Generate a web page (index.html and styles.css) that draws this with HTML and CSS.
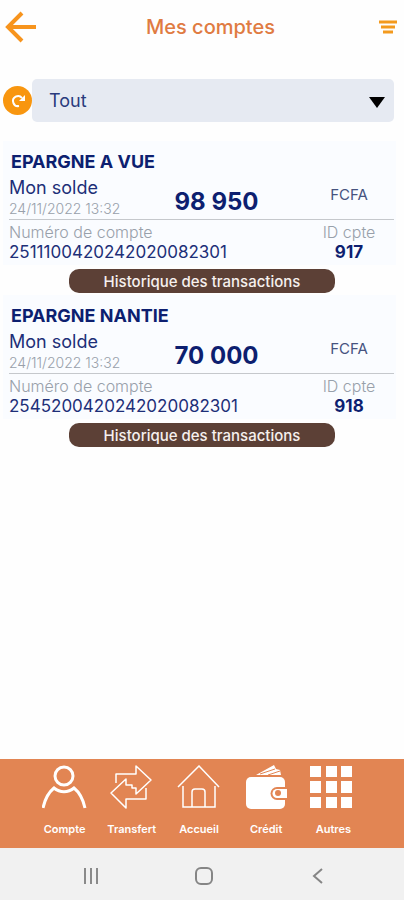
FILE: index.html
```html
<!DOCTYPE html>
<html lang="fr">
<head>
    <meta charset="UTF-8">
    <meta name="viewport" content="width=device-width, initial-scale=1.0">
    <title>Mes comptes</title>
    <link rel="stylesheet" href="styles.css">
</head>
<body>
    <header class="top-bar">
        <button class="icon-btn" aria-label="Retour">
            <svg width="32" height="32" viewBox="0 0 32 32" fill="none" stroke="#f7941d" stroke-width="4">
                <path d="M31 16H4M17 2L3 16l14 14"/>
            </svg>
        </button>
        <h1>Mes comptes</h1>
        <button class="icon-btn" aria-label="Filtrer">
            <svg width="20" height="16" viewBox="0 0 20 16" fill="none" stroke="#f39a1e" stroke-width="3">
                <path d="M1 3h18M3 8h14M5 13h10"/>
            </svg>
        </button>
    </header>

    <main>
        <div class="filter">
            <button class="refresh" aria-label="Actualiser">
                <svg width="16" height="16" viewBox="0 0 16 16" fill="none" stroke="#fff" stroke-width="2">
                    <path d="M9 13A5 5 0 1 1 12 5"/>
                    <path d="M15 2v6H9z" fill="#fff" stroke="none"/>
                </svg>
            </button>
            <div class="select-box">
                <select aria-label="Type de compte">
                    <option>Tout</option>
                </select>
                <svg class="caret" width="16" height="11" viewBox="0 0 16 11"><path d="M0 0h16L8 11z"/></svg>
            </div>
        </div>

        <section class="account">
            <div class="card">
                <h2>EPARGNE A VUE</h2>
                <div class="balance">
                    <div>
                        <p class="label">Mon solde</p>
                        <p class="date">24/11/2022 13:32</p>
                    </div>
                    <strong class="amount">98 950</strong>
                    <span class="currency">FCFA</span>
                </div>
                <div class="details">
                    <div>
                        <p class="hint">Numéro de compte</p>
                        <p class="number">2511100420242020082301</p>
                    </div>
                    <div class="account-id">
                        <p class="hint">ID cpte</p>
                        <p class="id">917</p>
                    </div>
                </div>
            </div>
            <button class="history">Historique des transactions</button>
        </section>

        <section class="account">
            <div class="card">
                <h2>EPARGNE NANTIE</h2>
                <div class="balance">
                    <div>
                        <p class="label">Mon solde</p>
                        <p class="date">24/11/2022 13:32</p>
                    </div>
                    <strong class="amount">70 000</strong>
                    <span class="currency">FCFA</span>
                </div>
                <div class="details">
                    <div>
                        <p class="hint">Numéro de compte</p>
                        <p class="number">2545200420242020082301</p>
                    </div>
                    <div class="account-id">
                        <p class="hint">ID cpte</p>
                        <p class="id">918</p>
                    </div>
                </div>
            </div>
            <button class="history">Historique des transactions</button>
        </section>
    </main>

    <nav class="menu">
        <a href="#compte">
            <svg width="46" height="46" viewBox="0 0 46 46" fill="none" stroke="#fff" stroke-width="3">
                <circle cx="22" cy="11" r="9"/>
                <path d="M1 43C3 34 7 27 12 23c6 5 14 5 20 0 5 4 9 11 11 20"/>
            </svg>
            Compte
        </a>
        <a href="#transfert">
            <svg width="46" height="46" viewBox="0 0 46 46" fill="none" stroke="#fff" stroke-width="1.500" stroke-linejoin="round">
                <path d="M7 18V9h20V1l15 14-15 14v-6h-4v-3h-6v-6L2 28l15 15v-9h20V23"/>
            </svg>
            Transfert
        </a>
        <a href="#accueil">
            <svg width="46" height="46" viewBox="0 0 46 46" fill="none" stroke="#fff" stroke-width="1.500">
                <path d="M2 22L23 1l20 21M7 21v21h32V21M16 42V27q0-3 3-3h7q3 0 3 3v15"/>
            </svg>
            Accueil
        </a>
        <a href="#credit">
            <svg width="46" height="46" viewBox="0 0 46 46" fill="#fff">
                <path d="M13 10L31 0l2 4 4 1 1 5z"/>
                <path d="M17 9l15-5M25 10l12-4" stroke="#e28553"/>
                <rect x="3" y="12" width="39" height="32" rx="5"/>
                <path d="M46 22H34a6 6 0 0 0 0 13h12z" fill="#e28553"/>
                <path d="M44 24H34a4 4 0 0 0 0 9h10z"/>
                <circle cx="35" cy="28" r="3" fill="#e28553"/>
            </svg>
            Crédit
        </a>
        <a href="#autres">
            <svg width="46" height="46" viewBox="0 0 46 46" fill="#fff">
                <path d="M0 1h11v11H0zM16 1h11v11H16zM31 1h11v11H31zM0 16h11v12H0zM16 16h11v12H16zM31 16h11v12H31zM0 32h11v11H0zM16 32h11v11H16zM31 32h11v11H31z"/>
            </svg>
            Autres
        </a>
    </nav>

    <div class="system-bar">
        <button class="icon-btn" aria-label="Applications récentes">
            <svg width="20" height="20" viewBox="0 0 20 20" fill="none" stroke="#8a8a8a" stroke-width="2"><path d="M4 2v16M10 2v16M16 2v16"/></svg>
        </button>
        <button class="icon-btn" aria-label="Écran d'accueil">
            <svg width="20" height="20" viewBox="0 0 20 20" fill="none" stroke="#858585" stroke-width="2"><rect x="2" y="2" width="16" height="16" rx="5"/></svg>
        </button>
        <button class="icon-btn" aria-label="Précédent">
            <svg width="20" height="20" viewBox="0 0 20 20" fill="none" stroke="#858585" stroke-width="2"><path d="M15 3l-8 7 8 7"/></svg>
        </button>
    </div>
</body>
</html>
```
FILE: styles.css
```css
* {
    box-sizing: border-box;
    margin: 0;
    padding: 0;
}
body {
    display: flex;
    flex-direction: column;
    min-height: 100vh;
    background: #fefefe;
    color: #1d2f78;
    font-family: Inter, "Open Sans", sans-serif;
}
button {
    border: none;
    cursor: pointer;
    font-family: inherit;
}
svg {
    display: block;
}
.icon-btn {
    background: none;
}
.top-bar {
    display: flex;
    align-items: center;
    height: 54px;
    padding: 0 6px 0 5px;
}
.top-bar h1 {
    flex: 1;
    padding-left: 6px;
    text-align: center;
    color: #e07b42;
    font-size: 20px;
    font-weight: 500;
}
main {
    flex: 1;
    padding: 25px 0;
}
.filter {
    display: flex;
    align-items: center;
    margin: 0 10px 19px 3px;
}
.refresh {
    display: flex;
    align-items: center;
    justify-content: center;
    width: 29px;
    height: 29px;
    border-radius: 50%;
    background: #f8960f;
}
.select-box {
    position: relative;
    flex: 1;
}
.select-box select {
    appearance: none;
    width: 100%;
    height: 43px;
    padding: 0 40px 0 17px;
    border: none;
    border-radius: 5px;
    background: #e6eaf2;
    color: #2a3b7d;
    font-family: inherit;
    font-size: 18px;
}
.caret {
    position: absolute;
    top: 18px;
    right: 9px;
    pointer-events: none;
}
.account {
    margin-bottom: 2px;
}
.card {
    margin: 0 8px 0 3px;
    padding: 10px 0 3px 6px;
    background: #fafcff;
}
.card h2 {
    padding-left: 2px;
    margin-bottom: 4px;
    color: #0d1f70;
    font-size: 18px;
    line-height: 22px;
}
.balance {
    display: grid;
    grid-template-columns: 120px 1fr 90px;
    align-items: center;
    margin-right: 2px;
    border-bottom: 1px solid #c5c8cc;
    text-align: center;
}
.balance div {
    text-align: left;
}
.label {
    font-size: 18px;
    line-height: 22px;
}
.date {
    color: #98a0aa;
    font-size: 14px;
    font-weight: 300;
    line-height: 20px;
    white-space: nowrap;
}
.amount {
    padding-top: 8px;
    color: #0d1f70;
    font-size: 24px;
    line-height: 28px;
}
.currency {
    padding-bottom: 8px;
    color: #46537f;
    font-size: 15px;
}
.details {
    display: grid;
    grid-template-columns: 1fr 90px;
    margin-right: 2px;
    padding-top: 2px;
}
.hint {
    color: #98a0aa;
    font-size: 16px;
    font-weight: 300;
    line-height: 20px;
}
.number {
    font-size: 17px;
    line-height: 20px;
}
.account-id {
    text-align: center;
}
.id {
    color: #0d1f70;
    font-size: 17px;
    font-weight: 700;
    line-height: 20px;
}
.history {
    display: block;
    width: 66%;
    height: 24px;
    margin: 4px auto 0;
    border-radius: 10px;
    background: #5c4036;
    color: #f6f0ee;
    font-size: 15px;
    font-weight: 500;
}
.menu {
    display: grid;
    grid-template-columns: repeat(5, 1fr);
    padding: 6px 37px 11px 31px;
    background: #e28553;
}
.menu a {
    display: flex;
    flex-direction: column;
    align-items: center;
    gap: 10px;
    color: #fff;
    font-size: 11px;
    font-weight: 600;
    line-height: 16px;
    text-decoration: none;
}
.system-bar {
    display: flex;
    justify-content: space-between;
    align-items: center;
    height: 52px;
    padding: 4px 19% 0 20%;
    background: #f1f1f1;
}
```
